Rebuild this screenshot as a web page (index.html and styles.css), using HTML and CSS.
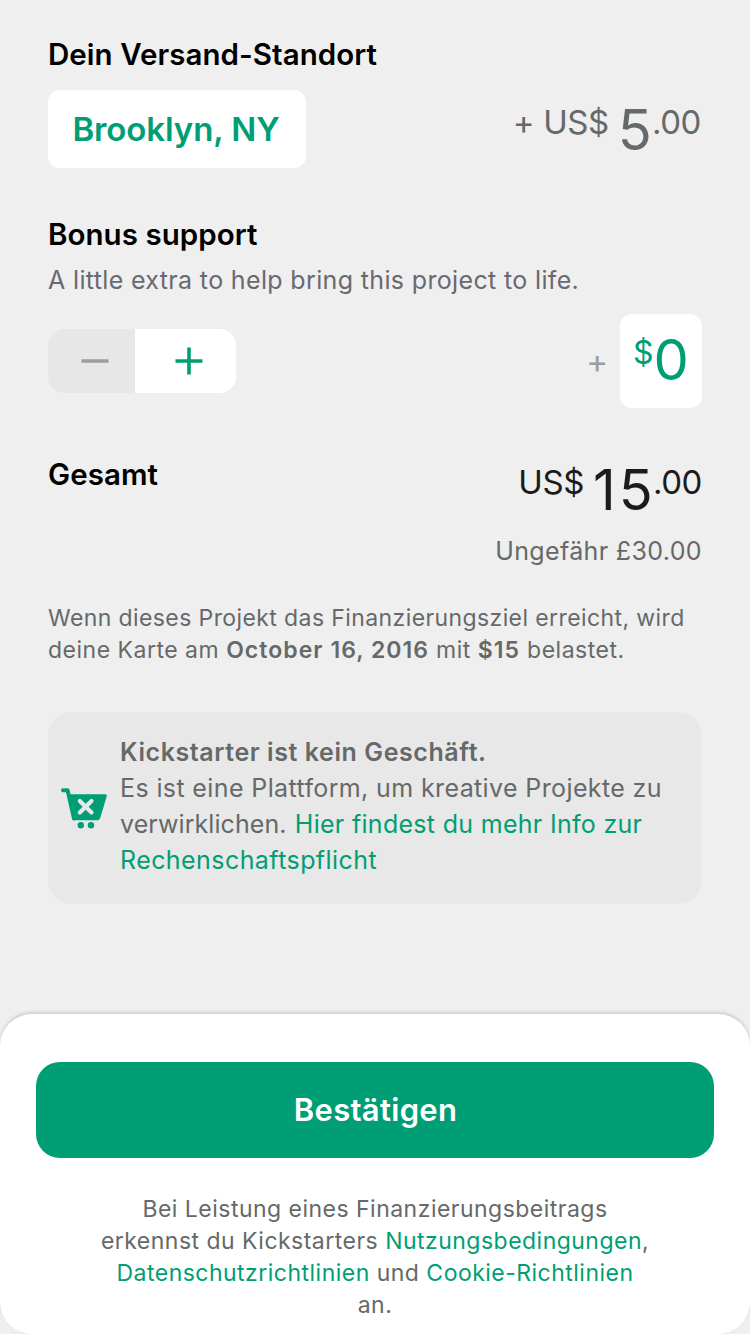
FILE: index.html
```html
<!DOCTYPE html>
<html lang="de">
<head>
<meta charset="utf-8">
<title>Zusammenfassung</title>
<link rel="stylesheet" href="styles.css">
</head>
<body>
<main class="summary">
  <section class="shipping">
    <h2 class="title">Dein Versand-Standort</h2>
    <div class="row">
      <button class="location">Brooklyn, NY</button>
      <div class="price muted"><span class="small plus">+</span><span class="small currency">US$</span><span class="big">5</span><span class="small cents">.00</span></div>
    </div>
  </section>
  <section class="bonus">
    <h2 class="title">Bonus support</h2>
    <p class="sub">A little extra to help bring this project to life.</p>
    <div class="row bonus-row">
      <div class="stepper">
        <button class="step minus" aria-label="Weniger"><svg width="28" height="28" viewBox="0 0 28 28"><path d="M0.5 14H27.5" stroke="#9b9e9e" stroke-width="3.6"/></svg></button>
        <button class="step add" aria-label="Mehr"><svg width="28" height="28" viewBox="0 0 28 28"><path d="M0.5 14H27.5M14 0.5V27.5" stroke="#009e74" stroke-width="3.6"/></svg></button>
      </div>
      <div class="amount"><span class="amount-plus">+</span><div class="amount-box"><span class="amount-currency">$</span><span class="amount-number">0</span></div></div>
    </div>
  </section>
  <section class="total">
    <h2 class="title">Gesamt</h2>
    <div class="total-side">
      <div class="price dark"><span class="small currency">US$</span><span class="big spaced">15</span><span class="small cents">.00</span></div>
      <p class="approx">Ungefähr £30.00</p>
    </div>
  </section>
  <p class="charge">Wenn dieses Projekt das Finanzierungsziel erreicht, wird<br><span class="charge-end">deine Karte am <b>October 16, 2016</b> mit <b>$15</b> belastet.</span></p>
  <aside class="notice">
    <svg class="cart" width="48" height="42" viewBox="0 0 48 42"><path d="M3 2.2H7.6L14 30.5" fill="none" stroke="#009e74" stroke-width="4" stroke-linecap="round" stroke-linejoin="round"/><path d="M8 6.3H45.5Q47.2 6.4 46.8 8L40.2 30Q39.4 32.3 37.3 32.3H15Q12.9 32.3 12.4 30Z" fill="#009e74"/><path d="M19.8 13L31.5 24.5M31.5 13L19.8 24.5" stroke="#e8e8e8" stroke-width="4.2" stroke-linecap="round"/><circle cx="20.8" cy="37.2" r="3.2" fill="#009e74"/><circle cx="31" cy="37.2" r="3.2" fill="#009e74"/></svg>
    <p class="notice-text"><b>Kickstarter ist kein Geschäft.</b><br>Es ist eine Plattform, um kreative Projekte zu<br><span class="tight">verwirklichen. </span><a>Hier findest du mehr Info zur</a><br><a class="wide">Rechenschaftspflicht</a></p>
  </aside>
</main>
<footer class="sheet">
  <button class="confirm">Bestätigen</button>
  <p class="legal">Bei Leistung eines Finanzierungsbeitrags<br>erkennst du Kickstarters <a>Nutzungsbedingungen</a>,<br><a>Datenschutzrichtlinien</a> und <a>Cookie-Richtlinien</a><br>an.</p>
</footer>
</body>
</html>
```
FILE: styles.css
```css
* { box-sizing: border-box; }

body {
  display: flex;
  flex-direction: column;
  height: 1334px;
  margin: 0;
  overflow: hidden;
  background: #efefef;
  color: #656969;
  font-family: Inter, "Liberation Sans", sans-serif;
}

h2, p { margin: 0; }

button {
  margin: 0;
  padding: 0;
  border: 0;
  font-family: inherit;
}

b { font-weight: 600; }
a { color: #009e74; }

.summary { padding: 37px 48px 0; }

.title {
  color: #000;
  font-size: 29.5px;
  font-weight: 600;
  line-height: 34px;
  letter-spacing: 0.05px;
}

.row {
  display: flex;
  align-items: center;
  justify-content: space-between;
}

/* Shipping location */
.shipping .row { margin-top: 19px; }

.location {
  width: 258px;
  height: 78px;
  padding-right: 2px;
  border-radius: 12px;
  background: #fff;
  color: #009e74;
  font-size: 33px;
  font-weight: 600;
  letter-spacing: -0.1px;
}

.price {
  display: flex;
  align-items: center;
  margin-right: 1px;
  white-space: nowrap;
}

.small {
  margin-bottom: 14px;
  font-size: 33px;
  line-height: 34px;
  letter-spacing: -0.4px;
}

.big {
  padding-top: 2px;
  font-size: 56px;
  line-height: 46px;
}

.spaced {
  margin-right: -3px;
  letter-spacing: 3px;
}

.plus { margin-right: 9px; }
.currency { margin-right: 9px; }
.muted { color: #656969; }
.dark {
  margin-right: 0;
  color: #1b1b1b;
}

/* Bonus support */
.bonus { margin-top: 49px; }

.sub {
  margin-top: 13px;
  color: #696970;
  font-size: 25px;
  line-height: 32px;
  letter-spacing: 0.35px;
}

.bonus-row { margin-top: 18px; }

.stepper {
  display: flex;
  width: 188px;
  height: 64px;
  overflow: hidden;
  border-radius: 16px;
}

.step {
  display: flex;
  align-items: center;
  justify-content: center;
}

.minus {
  width: 87px;
  padding-left: 6px;
  background: #e7e7e7;
}

.add {
  width: 101px;
  padding-left: 7px;
  background: #fff;
}

.amount {
  display: flex;
  align-items: center;
  gap: 12px;
}

.amount-plus {
  color: #9b9e9e;
  font-size: 33px;
}

.amount-box {
  display: flex;
  align-items: center;
  width: 82px;
  height: 94px;
  padding: 0 0 3px 13px;
  border-radius: 12px;
  background: #fff;
  color: #009e74;
}

.amount-currency {
  margin-bottom: 13px;
  font-size: 32px;
  line-height: 34px;
}

.amount-number {
  font-size: 56px;
  line-height: 56px;
}

/* Total */
.total {
  display: flex;
  justify-content: space-between;
  margin-top: 49px;
}

.total-side {
  display: flex;
  flex-direction: column;
  align-items: flex-end;
  padding-top: 8px;
}

.approx {
  margin-top: 22px;
  font-size: 25px;
  line-height: 32px;
  letter-spacing: 0.36px;
}

.charge {
  margin-top: 35px;
  font-size: 23px;
  line-height: 32px;
  letter-spacing: 0.4px;
  white-space: nowrap;
}

.charge-end { letter-spacing: 0.5px; }
.charge-end b { letter-spacing: 1.05px; }

/* Accountability notice */
.notice {
  display: flex;
  align-items: center;
  height: 192px;
  margin-top: 46px;
  padding-left: 12px;
  border-radius: 24px;
  background: #e8e8e8;
}

.cart {
  flex: none;
  margin: 1px 12px 0 0;
}

.notice-text {
  padding-bottom: 4px;
  font-size: 25px;
  line-height: 36px;
  letter-spacing: 0.38px;
  white-space: nowrap;
}

.notice-text b { letter-spacing: 0.58px; }
.notice-text a { letter-spacing: 0.3px; }
.notice-text .wide { letter-spacing: 0.43px; }
.tight { letter-spacing: 0.08px; word-spacing: 1px; }

/* Bottom sheet */
.sheet {
  height: 320px;
  margin-top: auto;
  padding: 48px 36px 0;
  border-radius: 32px;
  background: #fff;
  box-shadow: 0 -2px 4px -1px rgba(0, 0, 0, 0.2);
}

.confirm {
  display: block;
  width: 100%;
  height: 96px;
  padding: 0 0 2px 1px;
  border-radius: 24px;
  background: #009e74;
  color: #fff;
  font-size: 31px;
  font-weight: 600;
  letter-spacing: 0.3px;
}

.legal {
  margin-top: 35px;
  font-size: 23px;
  line-height: 32px;
  letter-spacing: 0.48px;
  text-align: center;
}
```
